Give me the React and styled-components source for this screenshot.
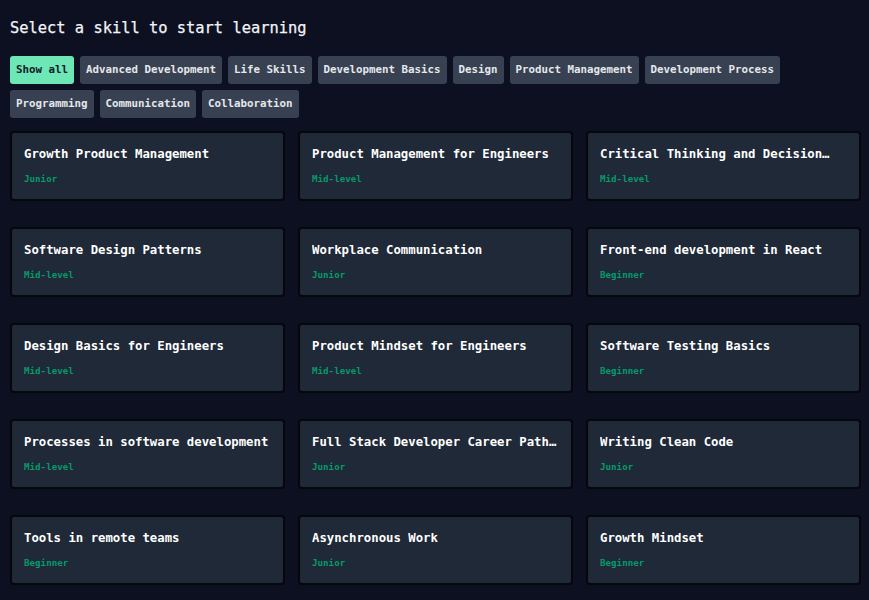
import React, { useState } from "react";
import styled, { createGlobalStyle } from "styled-components";

const GlobalStyle = createGlobalStyle`
  html, body {
    margin: 0;
    padding: 0;
    background: #0d1020;
  }
  * { box-sizing: border-box; }
`;

const Page = styled.div`
  min-height: 600px;
  background: #0d1020;
  padding: 17px 8px 20px 10px;
  font-family: "DejaVu Sans Mono", "Liberation Mono", monospace;
  color: #f3f4f6;
`;

const Heading = styled.h1`
  margin: 0 0 16px 0;
  font-size: 15.4px;
  line-height: 23px;
  font-weight: 400;
  color: #f3f4f6;
  -webkit-text-stroke: 0.25px #f3f4f6;
`;

const FilterBar = styled.div`
  display: flex;
  flex-wrap: wrap;
  gap: 6px;
  margin-bottom: 13px;
`;

const FilterButton = styled.button`
  font-family: inherit;
  font-size: 10.8px;
  line-height: 16px;
  font-weight: 700;
  height: 28px;
  padding: 6px 6px;
  border: none;
  border-radius: 3px;
  cursor: pointer;
  background: ${(p) => (p.$active ? "#6ee7b7" : "#374151")};
  color: ${(p) => (p.$active ? "#111827" : "#e5e7eb")};
`;

const Grid = styled.div`
  display: grid;
  grid-template-columns: repeat(3, 275px);
  column-gap: 13px;
  row-gap: 26px;
`;

const Card = styled.div`
  height: 70px;
  background: #1f2937;
  border: 2px solid #05070c;
  border-radius: 4px;
  padding: 12px 12px;
  display: flex;
  flex-direction: column;
  min-width: 0;
`;

const CardTitle = styled.div`
  font-size: 12.3px;
  line-height: 19px;
  max-height: 19px;
  font-weight: 700;
  color: #ffffff;
  display: -webkit-box;
  -webkit-box-orient: vertical;
  -webkit-line-clamp: 1;
  overflow: hidden;
`;

const Level = styled.div`
  margin-top: 8px;
  font-size: 9.2px;
  line-height: 14px;
  font-weight: 700;
  color: #069a6c;
`;

const categories = [
  "Show all",
  "Advanced Development",
  "Life Skills",
  "Development Basics",
  "Design",
  "Product Management",
  "Development Process",
  "Programming",
  "Communication",
  "Collaboration",
];

const skills = [
  ["Growth Product Management", "Junior"],
  ["Product Management for Engineers", "Mid-level"],
  ["Critical Thinking and Decision Making", "Mid-level"],
  ["Software Design Patterns", "Mid-level"],
  ["Workplace Communication", "Junior"],
  ["Front-end development in React", "Beginner"],
  ["Design Basics for Engineers", "Mid-level"],
  ["Product Mindset for Engineers", "Mid-level"],
  ["Software Testing Basics", "Beginner"],
  ["Processes in software development", "Mid-level"],
  ["Full Stack Developer Career Path Overview", "Junior"],
  ["Writing Clean Code", "Junior"],
  ["Tools in remote teams", "Beginner"],
  ["Asynchronous Work", "Junior"],
  ["Growth Mindset", "Beginner"],
];

export default function App() {
  const [active, setActive] = useState("Show all");
  return (
    <>
      <GlobalStyle />
      <Page>
        <Heading>Select a skill to start learning</Heading>
        <FilterBar>
          {categories.map((c) => (
            <FilterButton key={c} $active={c === active} onClick={() => setActive(c)}>
              {c}
            </FilterButton>
          ))}
        </FilterBar>
        <Grid>
          {skills.map(([title, level]) => (
            <Card key={title}>
              <CardTitle title={title}>{title}</CardTitle>
              <Level>{level}</Level>
            </Card>
          ))}
        </Grid>
      </Page>
    </>
  );
}
